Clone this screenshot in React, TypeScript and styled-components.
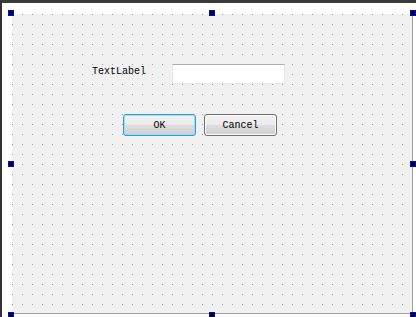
import React from "react";
import styled, { createGlobalStyle } from "styled-components";

const GlobalStyle = createGlobalStyle`
  html, body {
    margin: 0;
    padding: 0;
    background: #ffffff;
  }
  body {
    font-family: "Liberation Mono", "DejaVu Sans Mono", monospace;
  }
`;

const StyledDesignerFrame = styled.div`
  box-sizing: border-box;
  width: 416px;
  height: 317px;
  overflow: hidden;
  background: #ffffff;
  border-top: 3px solid #3a3a3a;
  border-left: 2px solid #333333;
  padding: 11px 0 0 10px;
`;

const StyledFormCanvas = styled.div`
  position: relative;
  box-sizing: border-box;
  width: 401px;
  height: 300px;
  padding: 50px 0 0 80px;
  display: flex;
  flex-direction: column;
  gap: 30px;
  background-color: #f0f0f0;
  background-image: radial-gradient(
    circle at 0.5px 0.5px,
    #9c9c9c 0.7px,
    transparent 0.75px
  );
  background-size: 10px 10px;
  border-right: 1px solid #a0a0a0;
  border-bottom: 1px solid #a0a0a0;
`;

const StyledHandle = styled.span<{ $x: number; $y: number }>`
  position: absolute;
  left: ${(p) => p.$x}px;
  top: ${(p) => p.$y}px;
  box-sizing: border-box;
  width: 6px;
  height: 6px;
  background: #000000;
  border: 1px solid #0000ff;
  z-index: 2;
`;

const StyledFieldRow = styled.div`
  display: flex;
  align-items: flex-start;
  height: 20px;
`;

const StyledButtonRow = styled.div`
  display: flex;
  gap: 8px;
  padding-left: 31px;
`;

const StyledLabel = styled.span`
  display: block;
  width: 80px;
  padding-top: 2px;
  font-size: 10px;
  line-height: 12px;
  color: #000000;
  white-space: nowrap;
`;

const StyledLineEdit = styled.div`
  box-sizing: border-box;
  width: 113px;
  height: 20px;
  background: #ffffff;
  border: 1px solid #e3e9ef;
  border-top-color: #abadb3;
`;

const StyledPushButton = styled.button<{ $focused?: boolean }>`
  box-sizing: border-box;
  width: 73px;
  height: 22px;
  padding: 1px 0 0;
  margin: 0;
  font-family: "Liberation Mono", "DejaVu Sans Mono", monospace;
  font-size: 10px;
  color: #000000;
  border-radius: 3px;
  border: 1px solid ${(p) => (p.$focused ? "#3399dd" : "#707070")};
  box-shadow: inset 0 0 0 1px ${(p) => (p.$focused ? "#9ddcf7" : "#fbfbfb")};
  background: linear-gradient(
    to bottom,
    #f2f2f2 0%,
    #ebebeb 50%,
    #dddddd 51%,
    #cfcfcf 100%
  );
  cursor: default;
`;

// selection grips around the form, on its corners and edge midpoints
const handles: [number, number][] = [
  [-4, -4],
  [197, -4],
  [398, -4],
  [-4, 147],
  [398, 147],
  [-4, 298],
  [197, 298],
  [398, 298],
];

function App() {
  return (
    <>
      <GlobalStyle />
      <StyledDesignerFrame>
        <StyledFormCanvas>
          {handles.map(([x, y], i) => (
            <StyledHandle key={i} $x={x} $y={y} />
          ))}
          <StyledFieldRow>
            <StyledLabel>TextLabel</StyledLabel>
            <StyledLineEdit />
          </StyledFieldRow>
          <StyledButtonRow>
            <StyledPushButton $focused>OK</StyledPushButton>
            <StyledPushButton>Cancel</StyledPushButton>
          </StyledButtonRow>
        </StyledFormCanvas>
      </StyledDesignerFrame>
    </>
  );
}

export default App;
